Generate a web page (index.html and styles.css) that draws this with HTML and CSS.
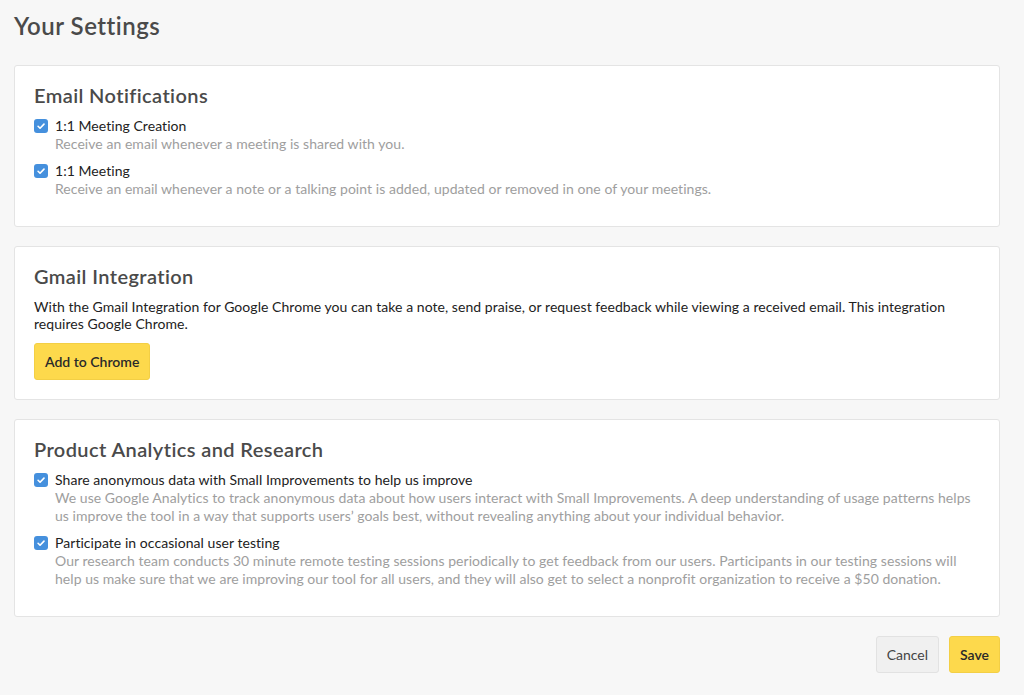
FILE: index.html
```html
<!DOCTYPE html>
<html lang="en">
<head>
    <meta charset="UTF-8">
    <title>Your Settings</title>
    <link rel="stylesheet" href="styles.css">
</head>
<body>
    <div class="page">
        <h1 class="title">Your Settings</h1>

        <!-- email -->
        <div class="card">
            <h2 class="card-title">Email Notifications</h2>
            <div class="options">
                <label class="option">
                    <span class="check"><svg viewBox="0 0 14 14"><path d="M3.6 7.3l2.3 2.3 4.6-4.8" fill="none" stroke="#fff" stroke-width="1.9" stroke-linecap="round" stroke-linejoin="round"/></svg></span>
                    <span class="option-text">
                        <span class="option-label">1:1 Meeting Creation</span>
                        <span class="option-desc">Receive an email whenever a meeting is shared with you.</span>
                    </span>
                </label>
                <label class="option">
                    <span class="check"><svg viewBox="0 0 14 14"><path d="M3.6 7.3l2.3 2.3 4.6-4.8" fill="none" stroke="#fff" stroke-width="1.9" stroke-linecap="round" stroke-linejoin="round"/></svg></span>
                    <span class="option-text">
                        <span class="option-label">1:1 Meeting</span>
                        <span class="option-desc">Receive an email whenever a note or a talking point is added, updated or removed in one of your meetings.</span>
                    </span>
                </label>
            </div>
        </div>

        <!-- gmail -->
        <div class="card">
            <h2 class="card-title">Gmail Integration</h2>
            <p class="text">With the Gmail Integration for Google Chrome you can take a note, send praise, or request feedback while viewing a received email. This integration requires Google Chrome.</p>
            <button class="btn btn-yellow">Add to Chrome</button>
        </div>

        <!-- analytics -->
        <div class="card">
            <h2 class="card-title">Product Analytics and Research</h2>
            <div class="options">
                <label class="option">
                    <span class="check"><svg viewBox="0 0 14 14"><path d="M3.6 7.3l2.3 2.3 4.6-4.8" fill="none" stroke="#fff" stroke-width="1.9" stroke-linecap="round" stroke-linejoin="round"/></svg></span>
                    <span class="option-text">
                        <span class="option-label">Share anonymous data with Small Improvements to help us improve</span>
                        <span class="option-desc">We use Google Analytics to track anonymous data about how users interact with Small Improvements. A deep understanding of usage patterns helps us improve the tool in a way that supports users’ goals best, without revealing anything about your individual behavior.</span>
                    </span>
                </label>
                <label class="option">
                    <span class="check"><svg viewBox="0 0 14 14"><path d="M3.6 7.3l2.3 2.3 4.6-4.8" fill="none" stroke="#fff" stroke-width="1.9" stroke-linecap="round" stroke-linejoin="round"/></svg></span>
                    <span class="option-text">
                        <span class="option-label">Participate in occasional user testing</span>
                        <span class="option-desc">Our research team conducts 30 minute remote testing sessions periodically to get feedback from our users. Participants in our testing sessions will help us make sure that we are improving our tool for all users, and they will also get to select a nonprofit organization to receive a $50 donation.</span>
                    </span>
                </label>
            </div>
        </div>

        <div class="actions">
            <button class="btn btn-grey">Cancel</button>
            <button class="btn btn-yellow">Save</button>
        </div>
    </div>
</body>
</html>
```

FILE: styles.css
```css
*{
    margin: 0;
    padding: 0;
    box-sizing: border-box;
}
body{
    background-color: #f7f7f7;
    font-family: Lato, "Open Sans", sans-serif;
    color: #222;
}
.page{
    width: 986px;
    margin-left: 14px;
    padding-top: 12px;
}
.title{
    font-size: 24px;
    font-weight: 600;
    letter-spacing: 0.5px;
    color: #4a4a4a;
    line-height: 28px;
    margin-bottom: 25px;
}
.card{
    background-color: #fff;
    border: 1px solid #e4e4e4;
    border-radius: 3px;
    padding: 16px 19px 19px;
    margin-bottom: 19px;
}
.card-title{
    font-size: 20px;
    font-weight: 600;
    letter-spacing: 0.4px;
    color: #4a4a4a;
    line-height: 26px;
    margin-bottom: 9px;
}
.options{
    padding-bottom: 9px;
}
.option{
    display: flex;
    gap: 7px;
    margin-bottom: 9px;
    font-size: 14px;
    letter-spacing: 0.05px;
}
.option:last-child{
    margin-bottom: 0;
}
.check{
    flex: none;
    width: 14px;
    height: 14px;
    margin-top: 2px;
    background-color: #4590dd;
    border-radius: 3px;
    display: flex;
    align-items: center;
    justify-content: center;
}
.check svg{
    width: 12px;
    height: 12px;
}
.option-text{
    display: flex;
    flex-direction: column;
}
.option-label{
    line-height: 18px;
    color: #222;
}
.option-desc{
    line-height: 18px;
    color: #9e9e9e;
}
.text{
    font-size: 14px;
    letter-spacing: 0.05px;
    line-height: 17px;
    color: #222;
    margin-bottom: 11px;
}
.btn{
    font-family: inherit;
    font-size: 14px;
    font-weight: 600;
    height: 37px;
    padding: 0 10px;
    border-radius: 3px;
    border: 1px solid transparent;
    cursor: pointer;
    color: #2a2a2a;
}
.btn-yellow{
    background-color: #fdd94c;
    border-color: #f3cf45;
}
.btn-grey{
    background-color: #f0f0f0;
    border-color: #e2e2e2;
    color: #444;
    font-weight: 400;
}
.actions{
    display: flex;
    justify-content: flex-end;
    gap: 10px;
}
```
